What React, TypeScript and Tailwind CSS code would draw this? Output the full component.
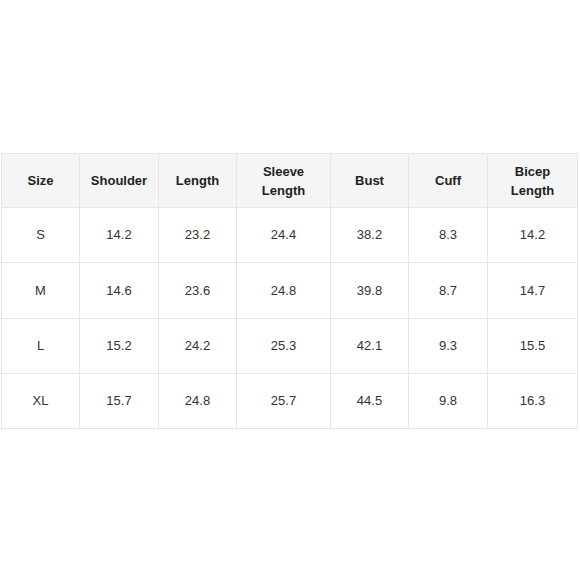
import React from 'react';

const headers = ['Size', 'Shoulder', 'Length', 'Sleeve\nLength', 'Bust', 'Cuff', 'Bicep\nLength'];

const rows = [
  ['S', '14.2', '23.2', '24.4', '38.2', '8.3', '14.2'],
  ['M', '14.6', '23.6', '24.8', '39.8', '8.7', '14.7'],
  ['L', '15.2', '24.2', '25.3', '42.1', '9.3', '15.5'],
  ['XL', '15.7', '24.8', '25.7', '44.5', '9.8', '16.3'],
];

const App: React.FC = () => {
  return (
    <div className="w-[580px] h-[580px] bg-white pt-[153px] pl-px font-['Liberation_Sans',Arial,sans-serif]">
      <div className="grid grid-cols-[78px_79px_78px_94px_78px_79px_90px] grid-rows-[54px_55px_56px_55px_55px] border-l border-t border-[#e6e6e6] w-fit">
        {headers.map((h) => (
          <div
            key={h}
            className="flex items-center justify-center text-center whitespace-pre-line bg-[#f5f5f5] border-r border-b border-[#e6e6e6] text-[13px] leading-[19px] font-bold text-[#222]"
          >
            {h}
          </div>
        ))}
        {rows.map((r) =>
          r.map((c, i) => (
            <div
              key={r[0] + i}
              className="flex items-center justify-center border-r border-b border-[#e6e6e6] text-[13px] text-[#333]"
            >
              {c}
            </div>
          ))
        )}
      </div>
    </div>
  );
};

export default App;
